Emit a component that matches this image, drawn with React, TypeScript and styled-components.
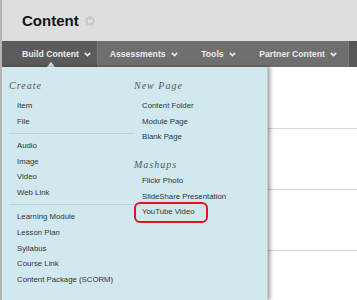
import React from 'react';
import styled, { createGlobalStyle } from 'styled-components';

const GlobalStyle = createGlobalStyle`
  html, body { margin: 0; padding: 0; background: #fff; }
  body { font-family: "Liberation Sans", Arial, sans-serif; }
`;

const Page = styled.div`
  width: 357px;
  height: 300px;
  overflow: hidden;
  box-sizing: border-box;
  border-left: 2px solid #b4b4b4;
  display: flex;
  flex-direction: column;
`;

const Header = styled.header`
  height: 41px;
  flex-shrink: 0;
  background: #dedede;
  display: flex;
  align-items: center;
  gap: 6px;
  padding-left: 20px;
`;

const Title = styled.h1`
  margin: 0;
  font-size: 15px;
  line-height: 1;
  font-weight: bold;
  color: #141414;
`;

const Nav = styled.nav`
  height: 26px;
  flex-shrink: 0;
  background: #6f6f6f;
  display: flex;
  align-items: stretch;
`;

const Tab = styled.div<{ $active?: boolean }>`
  position: relative;
  display: flex;
  align-items: center;
  gap: 5px;
  box-sizing: border-box;
  color: #ececec;
  font-size: 8.7px;
  font-weight: bold;
  white-space: nowrap;
  padding: ${(p) => (p.$active ? '0 0 0 20px' : '0 11.5px')};
  width: ${(p) => (p.$active ? '99px' : 'auto')};
  padding-left: ${(p) => (p.$active ? '20px' : '12px')};
  background: ${(p) => (p.$active ? '#5b5b5b' : 'transparent')};
  border-right: ${(p) => (p.$active ? '1px solid #7c7c7c' : 'none')};
`;

const Pointer = styled.span`
  position: absolute;
  left: 45px;
  bottom: 0;
  width: 0;
  height: 0;
  border-left: 4px solid transparent;
  border-right: 4px solid transparent;
  border-bottom: 5px solid #d1e8ee;
`;

const NavEnd = styled.div`
  margin-left: auto;
  width: 8px;
  background: #575757;
  border-left: 1px solid #7c7c7c;
`;

const Body = styled.div`
  flex: 1;
  display: flex;
  min-height: 0;
`;

const Menu = styled.div`
  position: relative;
  z-index: 1;
  width: 266px;
  flex-shrink: 0;
  box-sizing: border-box;
  background: #d1e8ee;
  box-shadow: 2px 0 4px rgba(0, 0, 0, 0.4);
  border-right: 1px solid #b9cdd2;
  display: grid;
  grid-template-columns: 125px 1fr;
  align-items: start;
  padding: 11px 0 0 7px;
`;

const Column = styled.div`
  display: flex;
  flex-direction: column;
`;

const Heading = styled.div<{ $top?: number; $bottom?: number }>`
  font-family: "Liberation Serif", "Times New Roman", serif;
  font-style: italic;
  font-size: 10px;
  letter-spacing: 1px;
  line-height: 16px;
  color: #555;
  margin-top: ${(p) => p.$top ?? 0}px;
  margin-bottom: ${(p) => p.$bottom ?? 4.2}px;
`;

const Item = styled.div<{ $highlight?: boolean }>`
  font-size: 7.8px;
  line-height: 15.6px;
  color: #333;
  white-space: nowrap;
  padding-left: 8px;
  ${(p) =>
    p.$highlight &&
    `
    align-self: flex-start;
    padding: 0 11px 1px 6px;
    margin-top: -2px;
    border: 2px solid #e3141e;
    border-radius: 6px;
  `}
`;

const Separator = styled.div`
  height: 1px;
  background: #bdd1d6;
  margin: 3.6px 0 4.2px;
`;

const Content = styled.div`
  flex: 1;
  padding-top: 1px;
`;

const Row = styled.div`
  height: 60px;
  border-bottom: 1px solid #d6d6d6;
`;

const Chevron = ({ color = '#ececec' }: { color?: string }) => (
  <svg width="7" height="5" viewBox="0 0 7 5" aria-hidden="true">
    <polyline points="0.8,0.9 3.5,3.6 6.2,0.9" fill="none" stroke={color} strokeWidth="1.5" />
  </svg>
);

const TitleIcon = () => (
  <svg width="10" height="10" viewBox="0 0 10 10" aria-hidden="true">
    <circle cx="5" cy="5" r="4.8" fill="#c9c9c9" />
    <polyline points="2.8,4 5,6.1 7.2,4" fill="none" stroke="#f0f0f0" strokeWidth="1.3" />
  </svg>
);

const tabs = ['Assessments', 'Tools', 'Partner Content'];

export default function App() {
  return (
    <>
      <GlobalStyle />
      <Page>
        <Header>
          <Title>Content</Title>
          <TitleIcon />
        </Header>
        <Nav>
          <Tab $active>
            Build Content <Chevron />
            <Pointer />
          </Tab>
          {tabs.map((t) => (
            <Tab key={t}>
              {t} <Chevron />
            </Tab>
          ))}
          <NavEnd />
        </Nav>
        <Body>
          <Menu>
            <Column>
              <Heading>Create</Heading>
              <Item>Item</Item>
              <Item>File</Item>
              <Separator />
              <Item>Audio</Item>
              <Item>Image</Item>
              <Item>Video</Item>
              <Item>Web Link</Item>
              <Separator />
              <Item>Learning Module</Item>
              <Item>Lesson Plan</Item>
              <Item>Syllabus</Item>
              <Item>Course Link</Item>
              <Item>Content Package (SCORM)</Item>
            </Column>
            <Column>
              <Heading>New Page</Heading>
              <Item>Content Folder</Item>
              <Item>Module Page</Item>
              <Item>Blank Page</Item>
              <Heading $top={12} $bottom={0}>Mashups</Heading>
              <Item>Flickr Photo</Item>
              <Item>SlideShare Presentation</Item>
              <Item $highlight>YouTube Video</Item>
            </Column>
          </Menu>
          <Content>
            <Row />
            <Row />
            <Row />
          </Content>
        </Body>
      </Page>
    </>
  );
}
